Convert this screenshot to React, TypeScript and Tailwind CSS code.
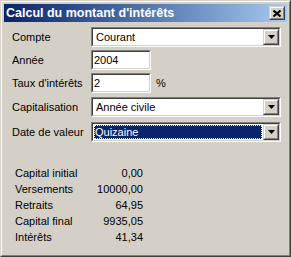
import React from 'react';

const FONT = "font-['Liberation_Sans',Arial,sans-serif]";

const Sunken = ({ className, children }: { className?: string; children?: React.ReactNode }) => (
  <div className={`border border-t-[#808080] border-l-[#808080] border-b-white border-r-white ${className ?? ''}`}>
    <div className="h-full border border-t-[#404040] border-l-[#404040] border-b-[#d4d0c8] border-r-[#d4d0c8] bg-white flex items-stretch">
      {children}
    </div>
  </div>
);

const Raised = ({ className, children }: { className?: string; children?: React.ReactNode }) => (
  <div className={`border border-t-[#d4d0c8] border-l-[#d4d0c8] border-b-[#404040] border-r-[#404040] bg-[#d4d0c8] ${className ?? ''}`}>
    <div className="h-full border border-t-white border-l-white border-b-[#808080] border-r-[#808080] flex items-center justify-center">
      {children}
    </div>
  </div>
);

const Arrow = () => (
  <svg width="7" height="4" viewBox="0 0 7 4">
    <polygon points="0,0 7,0 3.5,4" fill="#000" />
  </svg>
);

const TextBox = ({ value }: { value: string }) => (
  <Sunken className="w-[60px] h-[20px]">
    <span className="pl-[1px] text-[11px] leading-[16px] text-black">{value}</span>
  </Sunken>
);

const Combo = ({ value, focused }: { value: string; focused?: boolean }) => (
  <Sunken className="flex-1 h-[20px]">
    {focused ? (
      <div className="flex-1 m-[1px] bg-[#0a246a] border border-dotted border-[#f0ead0] flex items-center">
        <span className="text-[11px] leading-[12px] text-white">{value}</span>
      </div>
    ) : (
      <div className="flex-1 flex items-center">
        <span className="pl-[3px] text-[11px] text-black">{value}</span>
      </div>
    )}
    <Raised className="w-[16px] h-[16px]">
      <Arrow />
    </Raised>
  </Sunken>
);

const Row = ({ label, className, children }: { label: string; className?: string; children: React.ReactNode }) => (
  <div className={`flex items-center h-[20px] ${className ?? ''}`}>
    <div className="w-[79px] text-[11px] text-black whitespace-nowrap">{label}</div>
    {children}
  </div>
);

const results = [
  ['Capital initial', '0,00'],
  ['Versements', '10000,00'],
  ['Retraits', '64,95'],
  ['Capital final', '9935,05'],
  ['Intérêts', '41,34'],
];

export default function App() {
  return (
    <div className={`w-[291px] h-[257px] ${FONT} border border-t-[#d4d0c8] border-l-[#d4d0c8] border-b-[#404040] border-r-[#404040]`}>
      <div className="h-full border border-t-white border-l-white border-b-[#808080] border-r-[#808080] bg-[#d4d0c8] p-[2px] flex flex-col">
        {/* Title bar */}
        <div className="h-[18px] bg-gradient-to-r from-[#0a246a] to-[#a6caf0] flex items-center pl-[2px] pr-[2px]">
          <span className="flex-1 text-white font-bold text-[12.5px] whitespace-nowrap">Calcul du montant d'intérêts</span>
          <Raised className="w-[16px] h-[14px]">
            <svg width="8" height="7" viewBox="0 0 8 7">
              <path d="M0.5 0.5 L7.5 6.5 M7.5 0.5 L0.5 6.5" stroke="#000" strokeWidth="2" />
            </svg>
          </Raised>
        </div>

        {/* Client */}
        <div className="flex-1 flex flex-col pt-[5px] pl-[8px] pr-[6px]">
          <Row label="Compte">
            <Combo value="Courant" />
          </Row>
          <Row label="Année" className="mt-[3px]">
            <TextBox value="2004" />
          </Row>
          <Row label="Taux d'intérêts" className="mt-[3px]">
            <TextBox value="2" />
            <span className="ml-[5px] text-[11px] text-black">%</span>
          </Row>
          <Row label="Capitalisation" className="mt-[4px]">
            <Combo value="Année civile" />
          </Row>
          <Row label="Date de valeur" className="mt-[5px]">
            <Combo value="Quizaine" focused />
          </Row>

          <div className="mt-[23px] ml-[3px] w-[128px] flex flex-col">
            {results.map(([k, v]) => (
              <div key={k} className="flex justify-between h-[16px] items-center text-[11px] text-black">
                <span>{k}</span>
                <span>{v}</span>
              </div>
            ))}
          </div>
        </div>
      </div>
    </div>
  );
}
